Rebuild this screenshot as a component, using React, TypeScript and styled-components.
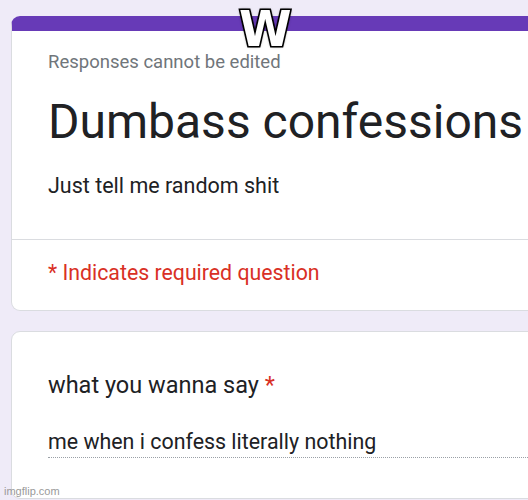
import React from "react";
import styled, { createGlobalStyle } from "styled-components";

const Global = createGlobalStyle`
  html, body { margin: 0; padding: 0; }
  body {
    background: #efebf8;
    font-family: Roboto, "Liberation Sans", Arial, sans-serif;
    overflow: hidden;
    width: 528px;
    height: 500px;
  }
`;

const Page = styled.div`
  position: relative;
  width: 528px;
  height: 500px;
  overflow: hidden;
  padding: 16px 0 0 11px;
  box-sizing: border-box;
  display: flex;
  flex-direction: column;
  gap: 20px;
`;

const Card = styled.section<{ $accent?: boolean }>`
  width: 620px;
  background: #fff;
  border: 1px solid #dadce0;
  border-radius: 9px;
  overflow: hidden;
  flex-shrink: 0;
  ${(p) => (p.$accent ? "border-top: 15px solid #673ab7;" : "")}
`;

const HeaderBody = styled.div`
  padding: 20px 36px 0;
`;

const Note = styled.div`
  font-size: 18.5px;
  color: #70757a;
  line-height: 22px;
`;

const Title = styled.h1`
  margin: 21px 0 0;
  font-size: 48px;
  font-weight: 400;
  color: #202124;
  line-height: 56px;
`;

const Description = styled.p`
  margin: 22px 0 0;
  font-size: 21.5px;
  color: #202124;
  line-height: 28px;
  padding-bottom: 39px;
`;

const Divider = styled.hr`
  margin: 0;
  border: none;
  border-top: 1px solid #dadce0;
`;

const Required = styled.div`
  padding: 20px 36px 24px;
  font-size: 21.3px;
  color: #d93025;
  line-height: 26px;
`;

const QuestionCard = styled.div`
  padding: 38px 36px 40px;
`;

const Question = styled.div`
  font-size: 23.5px;
  color: #202124;
  line-height: 30px;
`;

const Star = styled.span`
  color: #d93025;
`;

const Answer = styled.div`
  margin-top: 29px;
  font-size: 21.4px;
  color: #202124;
  line-height: 26px;
  padding-bottom: 2px;
  border-bottom: 1px dotted #9aa0a6;
`;

const Meme = styled.div`
  position: absolute;
  left: 239px;
  top: 6px;
  font-family: "DejaVu Sans Condensed", "DejaVu Sans", sans-serif;
  font-weight: bold;
  font-size: 49px;
  line-height: 48px;
  transform: scaleX(1.08);
  transform-origin: left top;
  color: #fff;
  -webkit-text-stroke: 3px #000;
  paint-order: stroke fill;
  text-shadow: 0 0 2px #000, 0 0 3px #000;
`;

const Watermark = styled.div`
  position: absolute;
  left: 4px;
  bottom: 3px;
  font-family: "Liberation Sans", Arial, sans-serif;
  font-size: 11px;
  color: #9a9a9a;
`;

export default function App() {
  return (
    <>
      <Global />
      <Page>
        <Card $accent>
          <HeaderBody>
            <Note>Responses cannot be edited</Note>
            <Title>Dumbass confessions</Title>
            <Description>Just tell me random shit</Description>
          </HeaderBody>
          <Divider />
          <Required>* Indicates required question</Required>
        </Card>
        <Card>
          <QuestionCard>
            <Question>
              what you wanna say <Star>*</Star>
            </Question>
            <Answer>me when i confess literally nothing</Answer>
          </QuestionCard>
        </Card>
        <Meme>W</Meme>
        <Watermark>imgflip.com</Watermark>
      </Page>
    </>
  );
}
